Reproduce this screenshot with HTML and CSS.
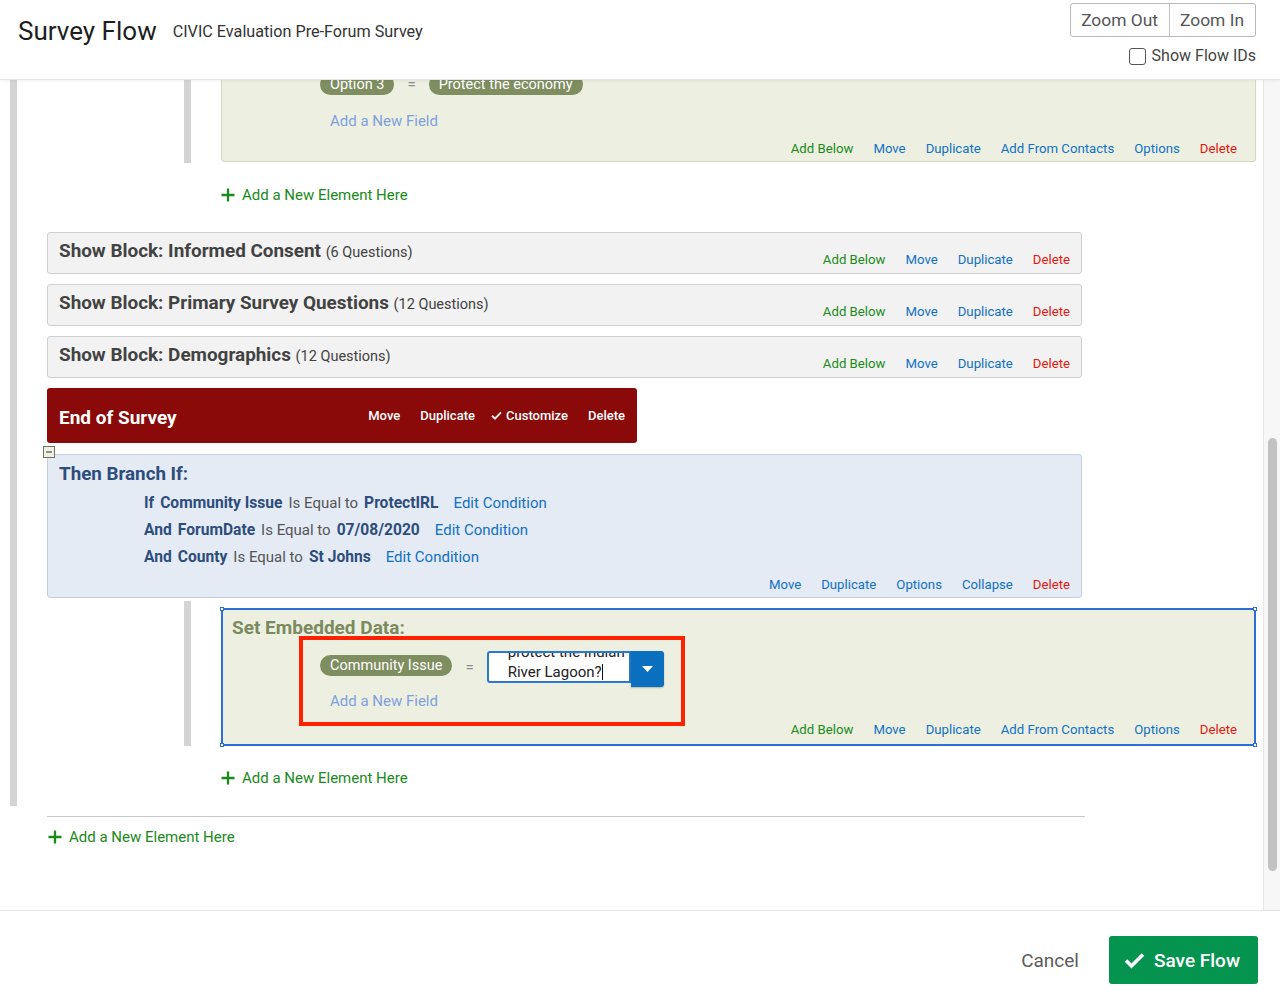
FILE: index.html
```html
<!DOCTYPE html>
<html lang="en">
<head>
<meta charset="utf-8">
<title>Survey Flow</title>
<link rel="stylesheet" href="styles.css">
</head>
<body>
<div class="app">
  <header class="topbar">
    <div class="title-group">
      <h1 class="page-title">Survey Flow</h1>
      <span class="survey-name">CIVIC Evaluation Pre-Forum Survey</span>
    </div>
    <div class="tools">
      <div class="zoom-group">
        <span class="zoom-btn">Zoom Out</span>
        <span class="zoom-btn">Zoom In</span>
      </div>
      <div class="flow-ids"><span class="checkbox"></span>Show Flow IDs</div>
    </div>
  </header>

  <div class="main">
    <div class="canvas">
      <div class="flow">
        <div class="trunk">
          <div class="nest nest-top">
            <div class="ed-box ed-box-top">
              <div class="ed-spacer"></div>
              <div class="ed-row">
                <span class="pill">Option 3</span>
                <span class="eq">=</span>
                <span class="pill">Protect the economy</span>
              </div>
              <div class="add-field">Add a New Field</div>
              <div class="actions">
                <span class="act-green">Add Below</span>
                <span class="act-blue">Move</span>
                <span class="act-blue">Duplicate</span>
                <span class="act-blue">Add From Contacts</span>
                <span class="act-blue">Options</span>
                <span class="act-red">Delete</span>
              </div>
            </div>
          </div>

          <div class="add-el">
            <svg class="plus" width="14" height="14" viewBox="0 0 14 14"><path d="M7 0.5v13M0.5 7h13" stroke="#1a8a1a" stroke-width="2.3" fill="none"/></svg>
            <span>Add a New Element Here</span>
          </div>

          <div class="block">
            <div class="block-title">Show Block: Informed Consent <span class="count">(6 Questions)</span></div>
            <div class="actions">
              <span class="act-green">Add Below</span>
              <span class="act-blue">Move</span>
              <span class="act-blue">Duplicate</span>
              <span class="act-red">Delete</span>
            </div>
          </div>
          <div class="block">
            <div class="block-title">Show Block: Primary Survey Questions <span class="count">(12 Questions)</span></div>
            <div class="actions">
              <span class="act-green">Add Below</span>
              <span class="act-blue">Move</span>
              <span class="act-blue">Duplicate</span>
              <span class="act-red">Delete</span>
            </div>
          </div>
          <div class="block">
            <div class="block-title">Show Block: Demographics <span class="count">(12 Questions)</span></div>
            <div class="actions">
              <span class="act-green">Add Below</span>
              <span class="act-blue">Move</span>
              <span class="act-blue">Duplicate</span>
              <span class="act-red">Delete</span>
            </div>
          </div>

          <div class="eos">
            <div class="eos-title">End of Survey</div>
            <div class="actions eos-actions">
              <span>Move</span>
              <span>Duplicate</span>
              <span class="eos-check"><svg width="11" height="9" viewBox="0 0 11 9"><path d="M1 4.8l3 2.8L10 1.4" stroke="#e8e8e8" stroke-width="2" fill="none"/></svg>Customize</span>
              <span>Delete</span>
            </div>
          </div>

          <div class="branch">
            <svg class="collapse-icon" width="12" height="12" viewBox="0 0 12 12"><rect x="0.5" y="0.5" width="11" height="11" fill="#eef0e6" stroke="#6d7455"/><path d="M3 6h6" stroke="#4f5540" stroke-width="1.2"/></svg>
            <div class="branch-title">Then Branch If:</div>
            <div class="conditions">
              <div class="cond"><b>If</b><b>Community Issue</b><span class="op">Is Equal to</span><b>ProtectIRL</b><span class="edit">Edit Condition</span></div>
              <div class="cond"><b>And</b><b>ForumDate</b><span class="op">Is Equal to</span><b>07/08/2020</b><span class="edit">Edit Condition</span></div>
              <div class="cond"><b>And</b><b>County</b><span class="op">Is Equal to</span><b>St Johns</b><span class="edit">Edit Condition</span></div>
            </div>
            <div class="actions">
              <span class="act-blue">Move</span>
              <span class="act-blue">Duplicate</span>
              <span class="act-blue">Options</span>
              <span class="act-blue">Collapse</span>
              <span class="act-red">Delete</span>
            </div>
          </div>

          <div class="nest nest-inner">
            <div class="ed-box selected">
              <div class="ed-title">Set Embedded Data:</div>
              <div class="ed-row">
                <span class="pill pill-lift">Community Issue</span>
                <span class="eq">=</span>
                <div class="value-field">
                  <div class="value-text"><div class="value-lines">protect the Indian<br>River Lagoon?<span class="text-caret"></span></div></div>
                  <div class="dd-btn"><svg width="11" height="6" viewBox="0 0 11 6"><path d="M0 0h11L5.5 6z" fill="#fff"/></svg></div>
                </div>
              </div>
              <div class="add-field">Add a New Field</div>
              <div class="actions">
                <span class="act-green">Add Below</span>
                <span class="act-blue">Move</span>
                <span class="act-blue">Duplicate</span>
                <span class="act-blue">Add From Contacts</span>
                <span class="act-blue">Options</span>
                <span class="act-red">Delete</span>
              </div>
              <span class="handle handle-tl"></span>
              <span class="handle handle-tr"></span>
              <span class="handle handle-bl"></span>
              <span class="handle handle-br"></span>
              <div class="highlight"></div>
            </div>
          </div>

          <div class="add-el add-el-last">
            <svg class="plus" width="14" height="14" viewBox="0 0 14 14"><path d="M7 0.5v13M0.5 7h13" stroke="#1a8a1a" stroke-width="2.3" fill="none"/></svg>
            <span>Add a New Element Here</span>
          </div>
        </div>

        <div class="rule"></div>
        <div class="add-el add-el-root">
          <svg class="plus" width="14" height="14" viewBox="0 0 14 14"><path d="M7 0.5v13M0.5 7h13" stroke="#1a8a1a" stroke-width="2.3" fill="none"/></svg>
          <span>Add a New Element Here</span>
        </div>
      </div>
    </div>
    <div class="scrolltrack"><div class="thumb"></div></div>
  </div>

  <footer class="footer">
    <span class="cancel">Cancel</span>
    <div class="save">
      <svg width="21" height="17" viewBox="0 0 21 17"><path d="M2 8.5l5.5 5.5L19 2.5" stroke="#fff" stroke-width="3.6" fill="none" stroke-linejoin="miter"/></svg>
      <span>Save Flow</span>
    </div>
  </footer>
</div>
</body>
</html>
```

FILE: styles.css
```css
* { box-sizing: border-box; }
html, body { margin: 0; padding: 0; }
body {
  font-family: Roboto, "Liberation Sans", Arial, sans-serif;
  color: #333;
  background: #fff;
}
.app {
  width: 1280px;
  height: 991px;
  display: flex;
  flex-direction: column;
  overflow: hidden;
}

/* ---------- header ---------- */
.topbar {
  height: 80px;
  flex: none;
  display: flex;
  justify-content: space-between;
  align-items: flex-start;
  padding: 0 24px 0 18px;
  background: #fff;
  border-bottom: 1px solid #e4e4e4;
  box-shadow: 0 1px 3px rgba(0, 0, 0, 0.06);
  position: relative;
  z-index: 2;
}
.title-group { display: flex; align-items: flex-start; padding-top: 16px; }
.page-title {
  margin: 0;
  font-size: 26px;
  line-height: 30px;
  font-weight: 400;
  color: #1e1e1e;
}
.survey-name {
  margin: 6px 0 0 16px;
  font-size: 16.2px;
  line-height: 20px;
  color: #333;
}
.tools { display: flex; flex-direction: column; align-items: flex-end; padding-top: 3px; }
.zoom-group {
  display: flex;
  height: 34px;
  border: 1px solid #b8b8b8;
  border-radius: 3px;
}
.zoom-btn {
  font-size: 17.4px;
  line-height: 32px;
  color: #555;
  padding: 0 11px 0 10px;
}
.zoom-btn + .zoom-btn { border-left: 1px solid #c4c4c4; }
.flow-ids {
  display: flex;
  align-items: center;
  margin-top: 9px;
  font-size: 16px;
  line-height: 20px;
  color: #444;
}
.checkbox {
  width: 17px;
  height: 17px;
  border: 1.5px solid #555;
  border-radius: 3px;
  margin-right: 6px;
  background: #fff;
}

/* ---------- main ---------- */
.main { flex: 1; display: flex; min-height: 0; }
.canvas { flex: 1; overflow: hidden; }
.scrolltrack {
  width: 17px;
  flex: none;
  background: #f7f7f7;
  border-left: 1px solid #e6e6e6;
  padding: 358px 0 0 4px;
}
.thumb { width: 9px; height: 433px; border-radius: 5px; background: #c2c2c2; }

.flow { margin-top: -54px; padding-left: 10px; }
.trunk { border-left: 7px solid #d4d4d4; padding: 0 0 18px 30px; }
.nest { margin-left: 137px; border-left: 7px solid #d4d4d4; padding-left: 30px; }
.nest-top { padding-bottom: 1px; }
.nest-inner { margin-top: 3px; padding-top: 7px; }

/* embedded data box */
.ed-box {
  width: 1035px;
  background: #edf0e1;
  border: 1px solid #d3d7c0;
  border-radius: 3px;
  padding: 7px 18px 5px 10px;
  position: relative;
}
.ed-box-top { padding-bottom: 3px; }
.ed-box-top .add-field { margin-top: 9px; margin-bottom: 9px; }
.ed-box.selected {
  border: 2px solid #2d6fd6;
  border-radius: 2px;
  padding: 7px 17px 5px 9px;
}
.ed-spacer { height: 32px; }
.ed-title {
  height: 22px;
  font-size: 19px;
  font-weight: 700;
  line-height: 22px;
  color: #7b8a5e;
  margin-bottom: 10px;
}
.ed-row {
  display: flex;
  align-items: center;
  height: 36px;
  margin: 0 0 6px 88px;
}
.pill {
  background: #7e8e60;
  color: #fff;
  font-size: 14.5px;
  line-height: 21px;
  height: 21px;
  padding: 0 10px;
  border-radius: 11px;
}
.pill-lift { margin-bottom: 3px; }
.eq { color: #8c8c8c; font-size: 15px; margin: 0 13px; }
.value-field { display: flex; align-self: flex-start; margin-top: 2px; }
.value-text {
  width: 144px;
  height: 32px;
  border: 2px solid #2a78d0;
  border-radius: 3px 0 0 3px;
  background: #fff;
  overflow: hidden;
  padding-left: 19px;
  font-size: 15px;
  line-height: 20px;
  color: #222;
}
.value-lines { margin-top: -11px; }
.text-caret {
  display: inline-block;
  width: 1px;
  height: 16px;
  background: #111;
  vertical-align: -3px;
}
.dd-btn {
  width: 33px;
  height: 36px;
  background: #0b6fc0;
  border-radius: 0 3px 3px 0;
  display: flex;
  align-items: center;
  justify-content: center;
  box-shadow: 0 1px 2px rgba(0, 0, 0, 0.25);
}
.add-field {
  margin: 0 0 10px 98px;
  font-size: 15px;
  line-height: 20px;
  color: #7f9fdf;
}
.handle {
  position: absolute;
  width: 4px;
  height: 4px;
  background: #fff;
  border: 1px solid #2d6fd6;
}
.handle-tl { left: -3px; top: -3px; }
.handle-tr { right: -3px; top: -3px; }
.handle-bl { left: -3px; bottom: -3px; }
.handle-br { right: -3px; bottom: -3px; }
.highlight {
  position: absolute;
  left: 76px;
  top: 26px;
  width: 386px;
  height: 90px;
  border: 4px solid #ff2200;
}

/* action links */
.actions {
  display: flex;
  justify-content: flex-end;
  gap: 20px;
  font-size: 13.2px;
  line-height: 18px;
  white-space: nowrap;
}
.act-green { color: #1a8a1a; }
.act-blue { color: #1170c4; }
.act-red { color: #e5170e; }

/* add element */
.add-el {
  display: flex;
  align-items: center;
  gap: 7px;
  height: 20px;
  color: #1a8a1a;
  font-size: 15px;
  margin: 22px 0 27px 174px;
}
.add-el-last { margin: 22px 0 0 174px; }
.add-el-root { margin: 10px 0 0 38px; }

/* show blocks */
.block {
  width: 1035px;
  height: 42px;
  display: flex;
  justify-content: space-between;
  align-items: flex-end;
  background: #f2f2f2;
  border: 1px solid #d0d0d0;
  border-radius: 3px;
  padding: 7px 11px 4px 11px;
  margin-bottom: 10px;
}
.block-title {
  height: 29px;
  padding-bottom: 7px;
  font-size: 18.9px;
  line-height: 22px;
  font-weight: 700;
  color: #424242;
  white-space: nowrap;
}
.block-title .count { font-size: 14.5px; font-weight: 400; line-height: 1; }

/* end of survey */
.eos {
  width: 590px;
  height: 55px;
  display: flex;
  align-items: center;
  justify-content: space-between;
  background: #8a0909;
  border-radius: 3px;
  padding: 0 12px 0 12px;
  color: #fff;
}
.eos-title { font-size: 19px; font-weight: 700; margin-top: 3px; }
.eos-actions { font-size: 13px; font-weight: 500; color: #fff; }
.eos-check { display: inline-flex; align-items: center; gap: 4px; margin-left: -4px; }

/* branch */
.branch {
  width: 1035px;
  margin-top: 11px;
  background: #e4ebf5;
  border: 1px solid #c5cfe0;
  border-radius: 3px;
  padding: 8px 11px 3px 11px;
  position: relative;
}
.collapse-icon { position: absolute; left: -5px; top: -9px; }
.branch-title {
  height: 22px;
  font-size: 18.8px;
  font-weight: 700;
  line-height: 22px;
  color: #2d4d7c;
  margin-bottom: 5px;
}
.conditions { margin-left: 85px; font-size: 15px; line-height: 27px; }
.cond { display: flex; gap: 6px; height: 27px; }
.cond b { color: #2d4d7c; font-weight: 700; font-size: 15.6px; }
.cond .op { color: #555; }
.cond .edit { color: #1170c4; margin-left: 9px; }
.branch .actions { margin-top: 5px; }

.rule { margin: 10px 0 0 37px; width: 1038px; border-top: 1px solid #c9c9c9; }

/* footer */
.footer {
  height: 81px;
  flex: none;
  border-top: 1px solid #e3e3e3;
  display: flex;
  justify-content: flex-end;
  align-items: center;
  gap: 30px;
  padding: 25px 22px 7px 0;
}
.cancel { font-size: 19px; color: #5c5c5c; }
.save {
  display: flex;
  align-items: center;
  gap: 9px;
  height: 48px;
  width: 149px;
  padding-left: 15px;
  background: #05944f;
  color: #fff;
  border-radius: 3px;
  font-size: 19px;
  font-weight: 500;
}
```
